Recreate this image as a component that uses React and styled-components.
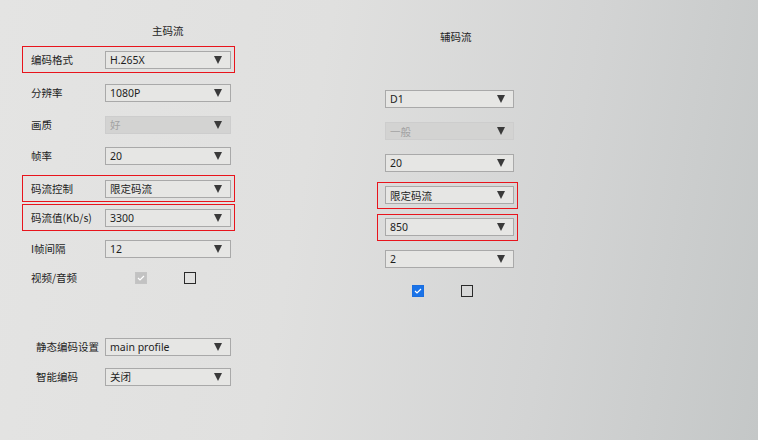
import styled, { createGlobalStyle } from 'styled-components';

const GlobalStyle = createGlobalStyle`
  html, body {
    margin: 0;
    padding: 0;
  }
  body {
    font-family: "Noto Sans CJK SC", "Noto Sans", sans-serif;
  }
`;

// gap = space under the row, the rows of the photo are not evenly spaced
const main = [
  { label: '编码格式', value: 'H.265X', mark: true, gap: 6 },
  { label: '分辨率', value: '1080P', gap: 5 },
  { label: '画质', value: '好', disabled: true, gap: 4 },
  { label: '帧率', value: '20', gap: 6 },
  { label: '码流控制', value: '限定码流', mark: true, gap: 2 },
  { label: '码流值(Kb/s)', value: '3300', mark: true, gap: 4 },
  { label: 'I帧间隔', value: '12', gap: 2 },
];

const sub = [
  null,
  { value: 'D1' },
  { value: '一般', disabled: true },
  { value: '20' },
  { value: '限定码流', mark: true },
  { value: '850', mark: true },
  { value: '2' },
];

const Select = ({ value, disabled }) => (
  <SelectBox $disabled={disabled}>
    <span>{value}</span>
    <Arrow />
  </SelectBox>
);

const Check = ({ state }) => (
  <CheckBox $state={state}>
    {state !== 'off' && (
      <svg width="8" height="6" viewBox="0 0 8 6">
        <path d="M1 3 L3 5 L7 1" fill="none" stroke="#fff" strokeWidth="1.2" />
      </svg>
    )}
  </CheckBox>
);

const App = () => {
  return (
    <>
      <GlobalStyle />
      <Page>
        <Column>
          <Title $pad={130}>主码流</Title>
          {main.map((r) => (
            <Row key={r.label} $mark={r.mark} $gap={r.gap}>
              <Label>{r.label}</Label>
              <Select value={r.value} disabled={r.disabled} />
            </Row>
          ))}
          <Row $gap={42}>
            <Label>视频/音频</Label>
            <Checks>
              <Check state="disabled" />
              <Check state="off" />
            </Checks>
          </Row>
          <Row $gap={3}>
            <Label $indent>静态编码设置</Label>
            <Select value="main profile" />
          </Row>
          <Row>
            <Label $indent>智能编码</Label>
            <Select value="关闭" />
          </Row>
        </Column>
        <SubColumn>
          <Title $pad={63} $gap={8}>辅码流</Title>
          {sub.map((r, i) =>
            r ? (
              <SubRow key={i} $mark={r.mark}>
                <Select value={r.value} disabled={r.disabled} />
              </SubRow>
            ) : (
              <SubRow key={i} />
            )
          )}
          <SubRow>
            <Checks $sub>
              <Check state="on" />
              <Check state="off" />
            </Checks>
          </SubRow>
        </SubColumn>
      </Page>
    </>
  );
};

export default App;

const Page = styled.div`
  width: 758px;
  height: 440px;
  overflow: hidden;
  display: grid;
  grid-template-columns: 377px 160px 1fr;
  background: linear-gradient(100deg, #e4e4e3 0%, #e0e0df 40%, #d3d4d4 72%, #c4c7c7 100%);
  color: #1e1e1e;
  font-size: 10.5px;
`;

const Column = styled.div`
  display: flex;
  flex-direction: column;
  padding: 22px 0 0 22px;
`;

const SubColumn = styled.div`
  display: flex;
  flex-direction: column;
  padding-top: 27.5px;
`;

const Title = styled.div`
  height: 18px;
  line-height: 18px;
  padding-left: ${({ $pad }) => $pad}px;
  margin-bottom: ${({ $gap }) => $gap || 6}px;
  font-size: 10.5px;
`;

const Row = styled.div`
  width: 213px;
  height: 27px;
  margin-bottom: ${({ $gap }) => $gap || 0}px;
  box-sizing: border-box;
  display: flex;
  align-items: center;
  padding: 0 3px 0 8px;
  border: 1.5px solid ${({ $mark }) => ($mark ? '#e8141c' : 'transparent')};
`;

const SubRow = styled(Row)`
  width: 141px;
  margin-bottom: 5px;
  padding: 0 3px 0 7px;
`;

const Label = styled.div`
  width: 74px;
  flex: none;
  box-sizing: border-box;
  padding-left: ${({ $indent }) => ($indent ? '5px' : '0')};
  white-space: nowrap;
  font-size: 10.5px;
  color: #1e1e1e;
`;

const SelectBox = styled.div`
  flex: 1;
  height: 18px;
  box-sizing: border-box;
  display: flex;
  align-items: center;
  justify-content: space-between;
  padding: 0 8px 0 4px;
  border: 1px solid ${({ $disabled }) => ($disabled ? '#cdcdcd' : '#a9a9a9')};
  background: ${({ $disabled }) => ($disabled ? '#d3d3d2' : '#e6e6e4')};
  color: ${({ $disabled }) => ($disabled ? '#a2a2a2' : '#1e1e1e')};
  font-family: "Noto Sans", "Noto Sans CJK SC", sans-serif;
  font-size: 10.5px;
`;

const Arrow = styled.span`
  width: 0;
  height: 0;
  border-left: 4.5px solid transparent;
  border-right: 4.5px solid transparent;
  border-top: 8px solid #3a3a3a;
`;

const Checks = styled.div`
  display: flex;
  gap: 37px;
  padding-left: ${({ $sub }) => ($sub ? '27px' : '30px')};
`;

const CheckBox = styled.div`
  width: 12px;
  height: 12px;
  box-sizing: border-box;
  display: flex;
  align-items: center;
  justify-content: center;
  border: ${({ $state }) =>
    $state === 'off' ? '1.5px solid #2a2a2a' : $state === 'on' ? '1px solid #1a6ee0' : '1px solid #c4c4c4'};
  background: ${({ $state }) => ($state === 'on' ? '#1a73e8' : $state === 'disabled' ? '#c2c2c2' : 'transparent')};
`;
